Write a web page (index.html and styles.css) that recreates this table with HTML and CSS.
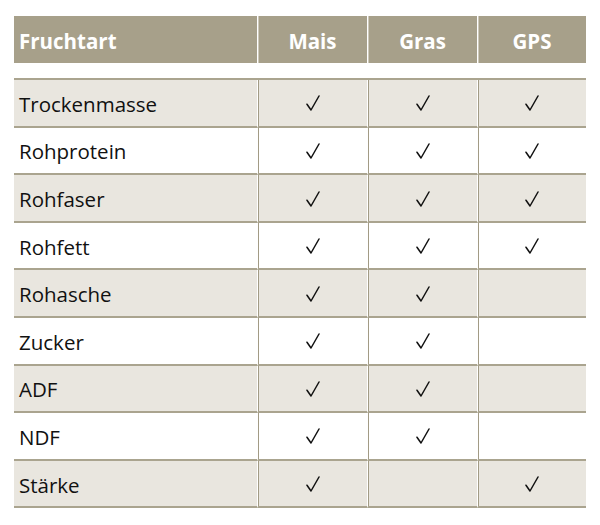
FILE: index.html
```html
<!DOCTYPE html>
<html lang="de">
<head>
<meta charset="utf-8">
<link rel="stylesheet" href="styles.css">
</head>
<body>
<svg width="0" height="0" class="defs" aria-hidden="true">
  <defs>
    <symbol id="chk" viewBox="0 0 14 16">
      <path d="M1 9.2 L5 15 L13 1" fill="none" stroke="#111111" stroke-width="1.5" stroke-linecap="round" stroke-linejoin="round"/>
    </symbol>
  </defs>
</svg>
<div class="wrap">
<table class="grid">
  <thead>
    <tr class="head">
      <th class="name">Fruchtart</th>
      <th>Mais</th>
      <th>Gras</th>
      <th>GPS</th>
    </tr>
  </thead>
  <tbody>
    <tr class="spacer"><td colspan="4"></td></tr>
    <tr class="alt"><td class="name">Trockenmasse</td><td><svg class="ck"><use href="#chk"/></svg></td><td><svg class="ck"><use href="#chk"/></svg></td><td><svg class="ck"><use href="#chk"/></svg></td></tr>
    <tr><td class="name">Rohprotein</td><td><svg class="ck"><use href="#chk"/></svg></td><td><svg class="ck"><use href="#chk"/></svg></td><td><svg class="ck"><use href="#chk"/></svg></td></tr>
    <tr class="alt"><td class="name">Rohfaser</td><td><svg class="ck"><use href="#chk"/></svg></td><td><svg class="ck"><use href="#chk"/></svg></td><td><svg class="ck"><use href="#chk"/></svg></td></tr>
    <tr><td class="name">Rohfett</td><td><svg class="ck"><use href="#chk"/></svg></td><td><svg class="ck"><use href="#chk"/></svg></td><td><svg class="ck"><use href="#chk"/></svg></td></tr>
    <tr class="alt"><td class="name">Rohasche</td><td><svg class="ck"><use href="#chk"/></svg></td><td><svg class="ck"><use href="#chk"/></svg></td><td></td></tr>
    <tr><td class="name">Zucker</td><td><svg class="ck"><use href="#chk"/></svg></td><td><svg class="ck"><use href="#chk"/></svg></td><td></td></tr>
    <tr class="alt"><td class="name">ADF</td><td><svg class="ck"><use href="#chk"/></svg></td><td><svg class="ck"><use href="#chk"/></svg></td><td></td></tr>
    <tr><td class="name">NDF</td><td><svg class="ck"><use href="#chk"/></svg></td><td><svg class="ck"><use href="#chk"/></svg></td><td></td></tr>
    <tr class="alt"><td class="name">Stärke</td><td><svg class="ck"><use href="#chk"/></svg></td><td></td><td><svg class="ck"><use href="#chk"/></svg></td></tr>
  </tbody>
</table>
</div>
</body>
</html>
```
FILE: styles.css
```css
html, body {
  margin: 0;
  padding: 0;
  background: #ffffff;
}
.defs {
  position: absolute;
  width: 0;
  height: 0;
}
.wrap {
  padding: 16px 0 0 14px;
}
.grid {
  width: 572px;
  border-collapse: separate;
  border-spacing: 0;
  font-family: "Open Sans", "DejaVu Sans", sans-serif;
  font-size: 20.5px;
  color: #111111;
  table-layout: fixed;
}
.grid th, .grid td {
  padding: 0;
  text-align: center;
  vertical-align: middle;
  box-sizing: border-box;
}
.grid th:nth-child(1), .grid td:nth-child(1) { width: 243px; }
.grid th:nth-child(2), .grid td:nth-child(2) { width: 110px; }
.grid th:nth-child(3), .grid td:nth-child(3) { width: 110px; }
.grid th:nth-child(4), .grid td:nth-child(4) { width: 109px; }
.head th {
  background: #a7a08a;
  color: #ffffff;
  font-weight: 700;
  height: 47px;
  padding-top: 3px;
  border-left: 1px solid #ffffff;
  box-shadow: inset 1px 0 0 #cfcabc;
}
.head th:first-child {
  border-left: 0;
  box-shadow: none;
}
.grid .name {
  text-align: left;
  padding-left: 5px;
}
.spacer td {
  height: 17px;
  background: #ffffff;
  border-bottom: 2px solid #aaa48f;
}
tbody tr:not(.spacer) td {
  height: 47.6px;
  border-bottom: 2px solid #aaa48f;
  border-left: 1px solid #ffffff;
  box-shadow: inset 1px 0 0 #a29b85;
  background: #ffffff;
}
tbody tr:not(.spacer) td.name {
  padding-top: 2px;
}
tbody tr:not(.spacer) td:first-child {
  border-left: 0;
  box-shadow: none;
}
tbody tr.alt td {
  background: #e9e6df;
}
.ck {
  display: inline-block;
  width: 14px;
  height: 16px;
  vertical-align: middle;
  position: relative;
  top: -2px;
}
```
